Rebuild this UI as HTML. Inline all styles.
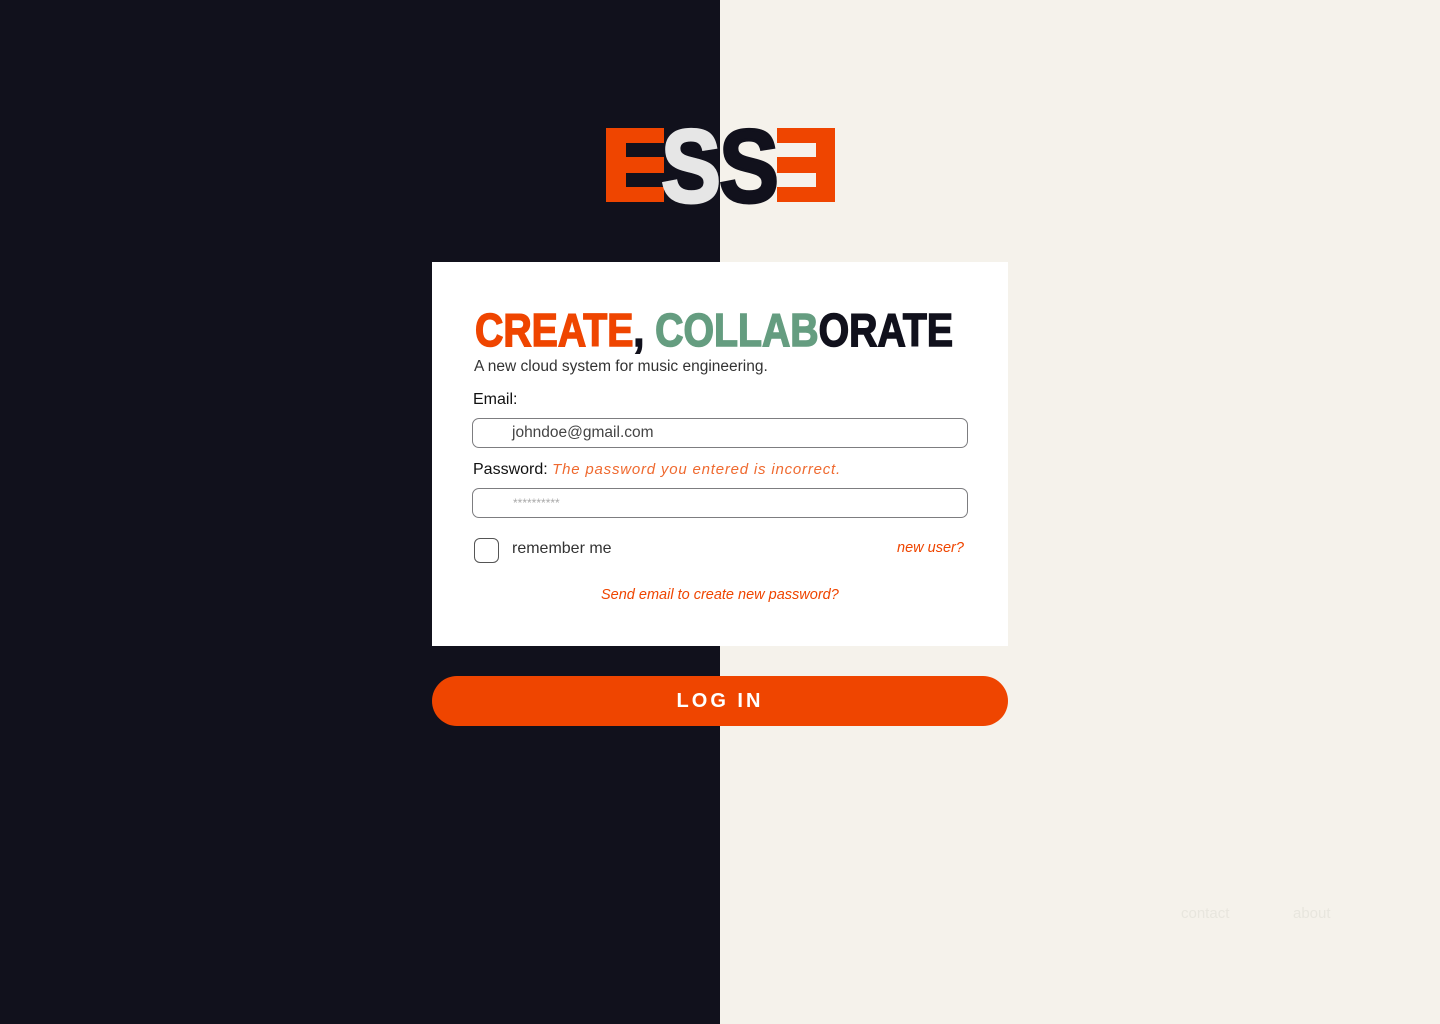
<!DOCTYPE html>
<html><head><meta charset="utf-8"><style>
*{margin:0;padding:0;box-sizing:border-box}
body{width:1440px;height:1024px;position:relative;overflow:hidden;font-family:"Liberation Sans",sans-serif;background:#f5f2eb}
.left{position:absolute;left:0;top:0;width:720px;height:1024px;background:#11111c}
.card{position:absolute;left:432px;top:262px;width:576px;height:384px;background:#fff}
.t{position:absolute;white-space:nowrap}
.inp{position:absolute;left:40px;width:496px;height:30px;border:1px solid #7d7d80;border-radius:7px}
.btn{position:absolute;left:432px;top:676px;width:576px;height:50px;border-radius:25px;background:#ef4500;color:#fff;font-weight:bold;font-size:20px;letter-spacing:3px;text-align:center;line-height:50px}
</style></head><body>
<div class="left"></div>
<svg style="position:absolute;left:600px;top:120px" width="240" height="90" viewBox="600 120 240 90">
<rect x="606" y="128" width="58" height="74" fill="#ef4500"/>
<rect x="626" y="143" width="38" height="14" fill="#11111c"/>
<rect x="626" y="173" width="38" height="14" fill="#11111c"/>
<rect x="777" y="128" width="58" height="74" fill="#ef4500"/>
<rect x="777" y="143" width="39" height="14" fill="#f5f2eb"/>
<rect x="777" y="173" width="39" height="14" fill="#f5f2eb"/>
<text x="661" y="202" font-family="Liberation Sans" font-weight="bold" font-size="104" fill="#e6e6e6" stroke="#e6e6e6" stroke-width="3" textLength="60" lengthAdjust="spacingAndGlyphs">S</text>
<text x="719" y="202" font-family="Liberation Sans" font-weight="bold" font-size="104" fill="#11111c" stroke="#11111c" stroke-width="3" textLength="60" lengthAdjust="spacingAndGlyphs">S</text>
</svg>
<div class="card">
<svg style="position:absolute;left:40px;top:40px" width="530" height="60">
<text x="3" y="44" font-family="Liberation Sans" font-weight="bold" font-size="46" stroke-width="1.5" textLength="478" lengthAdjust="spacingAndGlyphs"><tspan fill="#ef4500" stroke="#ef4500">CREATE</tspan><tspan fill="#11111c" stroke="#11111c">, </tspan><tspan fill="#659d80" stroke="#659d80">COLLAB</tspan><tspan fill="#11111c" stroke="#11111c">ORATE</tspan></text>
</svg>
<div class="t" style="left:42px;top:96px;font-size:15.5px;color:#333">A new cloud system for music engineering.</div>
<div class="t" style="left:41px;top:129px;font-size:16px;color:#111">Email:</div>
<div class="inp" style="top:156px"><span class="t" style="left:39px;top:5px;font-size:15.5px;color:#444">johndoe@gmail.com</span></div>
<div class="t" style="left:41px;top:199px;font-size:16px;color:#111">Password: <span style="color:#ef6a30;font-style:italic;letter-spacing:0.8px;font-size:15px">The password you entered is incorrect.</span></div>
<div class="inp" style="top:226px"><span class="t" style="left:40px;top:7px;font-size:12px;color:#aaa">**********</span></div>
<div style="position:absolute;left:42px;top:276px;width:25px;height:25px;border:1px solid #555;border-radius:6px"></div>
<div class="t" style="left:80px;top:278px;font-size:16px;color:#333">remember me</div>
<div class="t" style="left:465px;top:278px;font-size:14.5px;color:#ef4500;font-style:italic">new user?</div>
<div class="t" style="left:169px;top:325px;font-size:14.5px;color:#ef4500;font-style:italic">Send email to create new password?</div>
</div>
<div class="btn">LOG IN</div>
<div class="t" style="left:1181px;top:905px;font-size:15px;color:#e8e6de">contact</div>
<div class="t" style="left:1293px;top:905px;font-size:15px;color:#e8e6de">about</div>
</body></html>
